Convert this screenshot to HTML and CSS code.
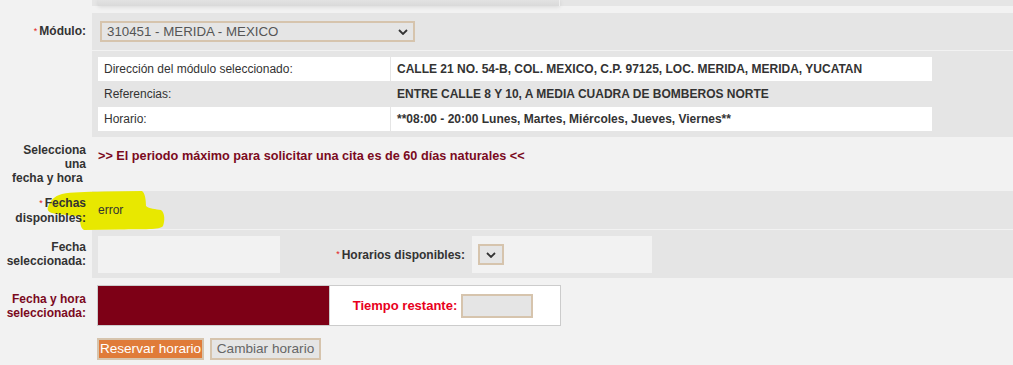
FILE: index.html
```html
<!doctype html>
<html lang="es">
<head>
  <meta charset="utf-8" />
  <meta name="viewport" content="width=device-width,initial-scale=1" />
  <title>Cita - Selección de módulo</title>
  <link rel="stylesheet" href="styles.css">
</head>
<body>
  <div class="form">
    <div class="row row-top">
      <div class="lbl"></div>
      <div class="cell gray"><div class="menu-edge"></div></div>
    </div>

    <div class="row row-modulo">
      <div class="lbl"><span class="req">*</span>Módulo:</div>
      <div class="cell gray pad-mod">
        <div class="select select-wide">
          <span>310451 - MERIDA - MEXICO</span>
          <svg class="chev" width="10" height="6" viewBox="0 0 10 6"><path d="M1 1 L5 5 L9 1" fill="none" stroke="#333" stroke-width="1.8"/></svg>
        </div>
      </div>
    </div>

    <div class="row row-info">
      <div class="lbl"></div>
      <div class="cell gray pad-info">
        <table class="info">
          <tr class="w">
            <td class="k">Dirección del módulo seleccionado:</td>
            <td class="v">CALLE 21 NO. 54-B, COL. MEXICO, C.P. 97125, LOC. MERIDA, MERIDA, YUCATAN</td>
          </tr>
          <tr class="g">
            <td class="k">Referencias:</td>
            <td class="v">ENTRE CALLE 8 Y 10, A MEDIA CUADRA DE BOMBEROS NORTE</td>
          </tr>
          <tr class="w">
            <td class="k">Horario:</td>
            <td class="v">**08:00 - 20:00 Lunes, Martes, Miércoles, Jueves, Viernes**</td>
          </tr>
        </table>
      </div>
    </div>

    <div class="row row-sel">
      <div class="lbl">Selecciona<br>una<br>fecha y hora&nbsp;</div>
      <div class="cell msg">&gt;&gt; El periodo máximo para solicitar una cita es de 60 días naturales &lt;&lt;</div>
    </div>

    <div class="row row-fechas">
      <svg class="mark" width="124" height="44" viewBox="0 0 124 44">
        <path d="M4 19 C6 13 10 8 18 6 C28 4 40 4 60 3.5 L98 3 C101 5 102 12 102 18 C105 21 112 21 117 22 C121 25 121 33 119 38 C116 42 100 41 76 41.5 L40 42 C36 40 36 33 36 29 C28 27 16 27 8 25 C4 24 3 21 4 19 Z" fill="#e8e800"/>
      </svg>
      <div class="lbl"><span class="over"><span class="req">*</span>Fechas<br>disponibles:</span></div>
      <div class="cell gray pad-fechas"><span class="over">error</span></div>
    </div>

    <div class="row row-fsel">
      <div class="lbl">Fecha<br>seleccionada:</div>
      <div class="cell gray pad-fsel">
        <div class="box box-fecha"></div>
        <div class="lbl2"><span class="req">*</span>Horarios disponibles:</div>
        <div class="box box-hora">
          <div class="select select-mini">
            <svg class="chev" width="10" height="6" viewBox="0 0 10 6"><path d="M1 1 L5 5 L9 1" fill="none" stroke="#333" stroke-width="1.8"/></svg>
          </div>
        </div>
      </div>
    </div>

    <div class="row row-fh">
      <div class="lbl lbl-maroon">Fecha y hora<br>seleccionada:</div>
      <div class="cell pad-fh">
        <div class="fh-box">
          <div class="fh-value"></div>
          <div class="fh-time">
            <span class="tiempo">Tiempo restante:</span>
            <div class="timer"></div>
          </div>
        </div>
      </div>
    </div>

    <div class="row row-btns">
      <div class="lbl"></div>
      <div class="cell pad-btns">
        <button class="btn btn-primary">Reservar horario</button>
        <button class="btn btn-plain">Cambiar horario</button>
      </div>
    </div>
  </div>
</body>
</html>
```

FILE: styles.css
```css
html, body {
  margin: 0;
  background: #f2f2f2;
  font-family: "Liberation Sans", Arial, sans-serif;
  font-size: 12px;
  color: #333;
}
.form { width: 1013px; }
.row { display: flex; }
.lbl {
  width: 86px; padding-right: 6px; flex: none;
  text-align: right; font-weight: bold; line-height: 14px;
}
.cell { flex: 1; }
.gray { background: #e5e5e5; }
.req { color: #e21b1b; font-size: 9px; font-weight: normal; position: relative; top: -1px; margin-right: 2px; }

/* top strip */
.row-top { height: 6px; margin-bottom: 7px; }
.menu-edge {
  width: 461px; height: 6px; margin-left: 6px;
  background: linear-gradient(180deg, #e2e2e2, #d9d9d9);
  border-right: 1px solid #efefef;
  box-shadow: 0 1px 4px rgba(0,0,0,0.10);
}

/* selects */
.select {
  display: flex; align-items: center; box-sizing: border-box;
  border: 2px solid #d6c4ad; background: #e5e5e5; height: 21px;
}
.select-wide { width: 315px; padding: 0 5px; justify-content: space-between; font-size: 13.3px; color: #555; }
.select-mini { width: 26px; justify-content: center; }

.row-modulo { height: 37px; }
.row-modulo .lbl { align-self: center; }
.pad-mod { padding: 8px 0 0 8px; }

/* info table */
.row-info { margin-top: 1px; }
.pad-info { padding: 6px 0 6px 6px; }
.info { border-collapse: collapse; width: 834px; }
.info td { padding: 0 6px; }
.info tr.w { background: #fff; height: 24px; }
.info tr.g { height: 26px; }
.info td.k { width: 280px; border-right: 1px solid #e5e5e5; }
.info td.v { font-weight: bold; }

/* selecciona */
.row-sel { height: 54px; }
.row-sel .lbl { padding-top: 6px; }
.msg { padding: 12px 0 0 6px; color: #7b0a1e; font-weight: bold; font-size: 12.7px; line-height: 14px; }

/* fechas disponibles */
.row-fechas { height: 38px; position: relative; align-items: center; }
.row-fechas .lbl { align-self: center; }
.mark { position: absolute; left: 44px; top: -3px; z-index: 1; }
.over { position: relative; z-index: 2; }
.pad-fechas { align-self: stretch; display: flex; align-items: center; padding-left: 6px; }

/* fecha seleccionada */
.row-fsel { height: 48px; margin-top: 1px; }
.row-fsel .lbl { align-self: center; }
.pad-fsel { display: flex; align-items: stretch; padding: 6px 0 5px 6px; }
.box { background: #f2f2f2; }
.box-fecha { width: 182px; }
.lbl2 { width: 185px; padding-right: 7px; display: flex; align-items: center; justify-content: flex-end; font-weight: bold; }
.box-hora { width: 174px; padding-left: 6px; display: flex; align-items: center; }

/* fecha y hora */
.row-fh { margin-top: 7px; }
.row-fh .lbl { align-self: center; }
.lbl-maroon { color: #7b0a1e; }
.pad-fh { padding-left: 5px; }
.fh-box { width: 462px; height: 39px; border: 1px solid #ccc; background: #fff; display: flex; }
.fh-value { width: 231px; background: #7d0016; border-right: 1px solid #ccc; }
.fh-time { flex: 1; display: flex; align-items: center; justify-content: center; gap: 4px; padding-right: 4px; }
.tiempo { color: #e8001c; font-weight: bold; font-size: 13px; }
.timer { width: 72px; height: 24px; box-sizing: border-box; border: 2px solid #d6c4ad; background: #e5e5e5; }

/* buttons */
.row-btns { margin-top: 12px; }
.pad-btns { padding-left: 5px; display: flex; gap: 6px; }
.btn {
  height: 22px; box-sizing: border-box; margin: 0;
  border: 2px solid #d6c4ad; padding: 0;
  font-family: "Liberation Sans", Arial, sans-serif; font-size: 13.6px; line-height: 16px;
  text-align: center;
}
.btn-primary { width: 107px; background: #e07b39; color: #fff; }
.btn-plain { width: 111px; background: #e5e5e5; color: #666; }
```
